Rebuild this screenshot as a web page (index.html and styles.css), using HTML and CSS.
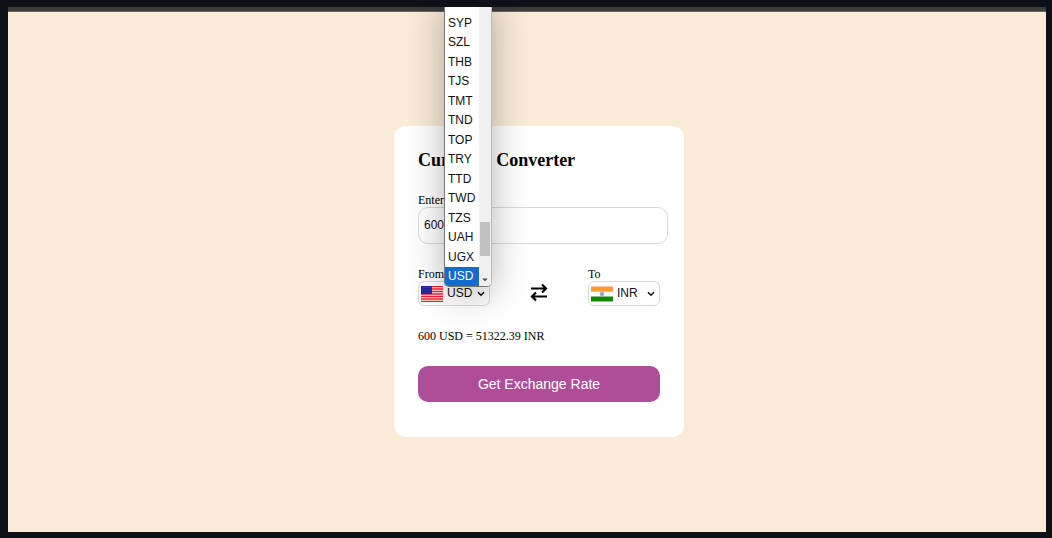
FILE: index.html
```html
<!DOCTYPE html>
<html lang="en">
<head>
<meta charset="utf-8">
<title>Currency Converter</title>
<link rel="stylesheet" href="styles.css">
</head>
<body>
<div class="window">
  <div class="toolbar"></div>
  <main class="page">
    <form class="card">
      <h1 class="title">Currency Converter</h1>
      <div class="amount">
        <label for="amount">Enter Amount</label>
        <input id="amount" class="amount-input" type="text" value="600">
      </div>
      <div class="pair">
        <div class="field">
          <label for="from">From</label>
          <div class="select-box">
            <svg class="flag" viewBox="0 0 22 16" aria-hidden="true">
              <rect width="22" height="16" fill="#fff"/>
              <path d="M0 .6h22M0 3.1h22M0 5.5h22M0 8h22M0 10.5h22M0 12.9h22M0 15.4h22" stroke="#ff1a2b" stroke-width="1.5"/>
              <rect width="11" height="8" fill="#2420a0"/>
              <path d="M1 1.5h10M1 4h10M1 6.5h10" stroke="#6563c0" stroke-width=".6" stroke-dasharray=".8 1"/>
            </svg>
            <select id="from" class="select"><option>USD</option></select>
            <svg class="chevron" viewBox="0 0 8 6" aria-hidden="true"><path d="M1 1.2l3 3 3-3"/></svg>
          </div>
          <div class="popup">
            <ul class="options" role="listbox" aria-label="Currencies">
              <li>SYP</li><li>SZL</li><li>THB</li><li>TJS</li><li>TMT</li><li>TND</li><li>TOP</li>
              <li>TRY</li><li>TTD</li><li>TWD</li><li>TZS</li><li>UAH</li><li>UGX</li><li class="selected">USD</li>
            </ul>
            <div class="scrollbar">
              <div class="thumb"></div>
              <svg class="scroll-arrow" viewBox="0 0 6 4" aria-hidden="true"><path d="M.3 .5h5.4L3 3.5z" fill="#505050"/></svg>
            </div>
          </div>
        </div>
        <svg class="swap" viewBox="0 0 18 20" aria-hidden="true">
          <path d="M1 5.5h15M12 1.5l4 4-4 4M17 13.5H2M6 9.5l-4 4 4 4"/>
        </svg>
        <div class="field">
          <label for="to">To</label>
          <div class="select-box">
            <svg class="flag" viewBox="0 0 22 16" aria-hidden="true">
              <rect width="22" height="16" fill="#fff"/>
              <rect y=".5" width="22" height="5.2" fill="#ff9933"/>
              <rect y="10.5" width="22" height="5" fill="#128807"/>
              <circle cx="11" cy="8" r="1.9" fill="#b9b9e4" stroke="#7c7cc4" stroke-width=".6"/>
              <circle cx="11" cy="8" r=".7" fill="#5050a8"/>
            </svg>
            <select id="to" class="select"><option>INR</option></select>
            <svg class="chevron" viewBox="0 0 8 6" aria-hidden="true"><path d="M1 1.2l3 3 3-3"/></svg>
          </div>
        </div>
      </div>
      <p class="result">600 USD = 51322.39 INR</p>
      <button class="submit" type="button">Get Exchange Rate</button>
    </form>
  </main>
</div>
</body>
</html>
```
FILE: styles.css
```css
* {
  box-sizing: border-box;
}

body {
  margin: 0;
  min-height: 100vh;
  padding: 7px 6px 6px 8px;
  display: flex;
  background: #0d1017;
  color: #000;
  font: 12px/14px "Liberation Serif", "Times New Roman", serif;
}

.window {
  flex: 1;
  display: flex;
  flex-direction: column;
  overflow: hidden;
  background: #faebd7;
}

.toolbar {
  height: 5px;
  background: #3c3c3c;
  border-bottom: 1px solid #6b6864;
}

.page {
  flex: 1;
  display: flex;
  align-items: center;
  justify-content: center;
  padding: 19px 0 0 24px;
}

.card {
  width: 290px;
  padding: 24px 24px 35px;
  border-radius: 12px;
  background: #fff;
}

.title {
  margin: 0 0 23px;
  font-size: 18px;
  line-height: 20px;
}

label {
  display: block;
}

.amount-input {
  display: block;
  width: calc(100% + 8px);
  height: 37px;
  padding: 0 5px 2px;
  border: 1px solid #d8d8d8;
  border-radius: 10px;
  background: transparent;
  color: #111;
  font: 12px "Liberation Sans", Arial, sans-serif;
}

.pair {
  display: flex;
  justify-content: space-between;
  align-items: center;
  margin-top: 23px;
}

.field {
  position: relative;
  width: 72px;
}

.select-box {
  position: relative;
  display: flex;
  align-items: center;
  height: 25px;
  padding-left: 2px;
  border: 1px solid #d8d8d8;
  border-radius: 6px;
}

.flag {
  flex: none;
  width: 22px;
  height: 16px;
}

.select {
  flex: 1;
  min-width: 0;
  height: 100%;
  padding: 0 0 1px 4px;
  border: 0;
  appearance: none;
  background: transparent;
  color: #111;
  font: 12px "Liberation Sans", Arial, sans-serif;
}

.chevron {
  position: absolute;
  right: 4px;
  top: 9px;
  width: 8px;
  height: 6px;
  fill: none;
  stroke: #111;
  stroke-width: 1.6;
  pointer-events: none;
}

.swap {
  width: 18px;
  height: 20px;
  margin-top: 12px;
  fill: none;
  stroke: #000;
  stroke-width: 2.2;
}

.popup {
  position: absolute;
  z-index: 1;
  left: 26px;
  bottom: 19px;
  display: flex;
  width: 48px;
  height: 290px;
  border: 1px solid #777;
  border-right-color: #bbb;
  border-radius: 0 0 5px 5px;
  background: #fff;
  box-shadow: 0 6px 36px rgba(0, 0, 0, 0.3);
  overflow: hidden;
}

.options {
  flex: 1;
  display: grid;
  grid-auto-rows: 1fr;
  align-self: flex-end;
  height: 273px;
  margin: 0;
  padding: 0;
  list-style: none;
  color: #111;
  font: 12px "Liberation Sans", Arial, sans-serif;
}

.options li {
  display: flex;
  align-items: center;
  padding-left: 3px;
  min-width: 0;
}

.options .selected {
  background: #1967d2;
  color: #fff;
}

.scrollbar {
  display: flex;
  flex-direction: column;
  justify-content: flex-end;
  align-items: center;
  width: 12px;
  padding-bottom: 4px;
  background: #f0f0f0;
}

.thumb {
  width: 10px;
  height: 34px;
  margin-bottom: 22px;
  background: #c1c1c1;
}

.scroll-arrow {
  width: 6px;
  height: 4px;
}

.result {
  margin: 23px 0;
}

.submit {
  display: block;
  width: 100%;
  height: 36px;
  border: 0;
  border-radius: 10px;
  background: #af4d98;
  color: #fff;
  font: 14px "Liberation Sans", Arial, sans-serif;
}
```
